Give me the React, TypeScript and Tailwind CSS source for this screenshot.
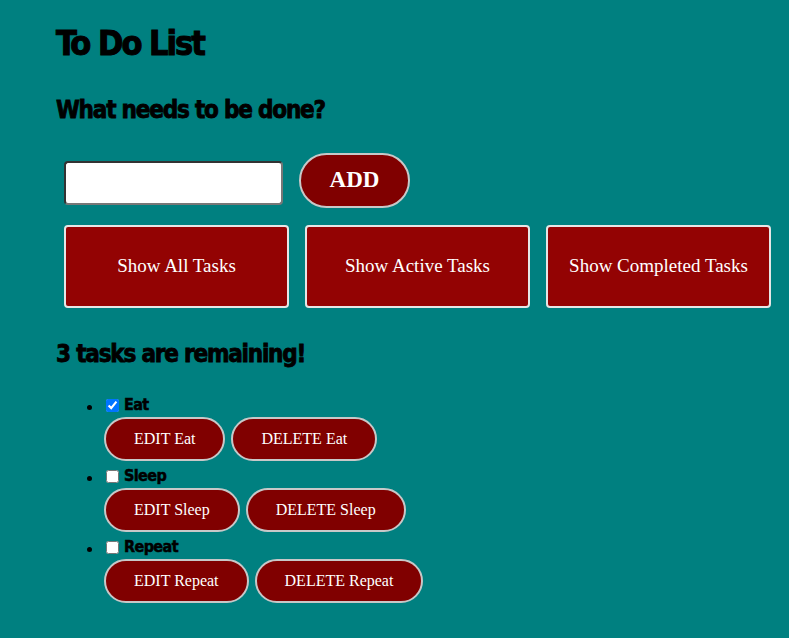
import { useState } from 'react'

const headFont = { fontFamily: 'Impact, "Liberation Sans Narrow", "DejaVu Sans Condensed", sans-serif' }

const App = () => {
  const [tasks, setTasks] = useState([
    { id: 1, name: 'Eat', done: true },
    { id: 2, name: 'Sleep', done: false },
    { id: 3, name: 'Repeat', done: false },
  ])
  const filters = ['Show All Tasks', 'Show Active Tasks', 'Show Completed Tasks']

  return (
    <div className="min-h-screen bg-[#008080] pl-14 pt-[23px] text-black font-['Liberation_Serif',serif]">
      <h1
        style={headFont}
        className="text-[34px] leading-[40px] font-bold tracking-[-2px] [-webkit-text-stroke:1px_black]"
      >
        To Do List
      </h1>
      <h2
        style={headFont}
        className="mt-[32px] text-[24px] leading-[30px] font-bold tracking-[-1.2px] [-webkit-text-stroke:0.8px_black]"
      >
        What needs to be done?
      </h2>

      {/* Add form */}
      <div className="mt-[28px] flex items-start gap-4 pl-2">
        <input
          type="text"
          className="mt-[8px] h-[44px] w-[219px] rounded-[4px] border-2 border-[#333] border-b-[#777] border-r-[#777] bg-white px-2"
        />
        <button className="h-[55px] w-[111px] rounded-full border-2 border-[#c8c8c8] bg-[#800000] text-[23px] font-bold text-white">
          ADD
        </button>
      </div>

      {/* Filters */}
      <div className="mt-[17px] flex gap-4 pl-2">
        {filters.map((f) => (
          <button
            key={f}
            className="h-[83px] w-[225px] rounded-[4px] border-2 border-[#e6e6e6] bg-[#930303] text-[19px] text-white"
          >
            {f}
          </button>
        ))}
      </div>

      <h2
        style={headFont}
        className="mt-[31px] text-[24px] leading-[30px] font-bold tracking-[-1.2px] [-webkit-text-stroke:0.8px_black]"
      >
        {tasks.filter((t) => !t.done).length + (tasks.some((t) => t.done) ? 1 : 0)} tasks are remaining!
      </h2>

      {/* Task list */}
      <ul className="mt-[24px] list-disc pl-[48px] marker:text-[18px]">
        {tasks.map((t) => (
          <li key={t.id} className="mb-[3px] text-[16px] leading-[24px]">
            <div className="flex h-[24px] items-center gap-[5px] pl-[2px]">
              <input
                type="checkbox"
                checked={t.done}
                onChange={() =>
                  setTasks(tasks.map((x) => (x.id === t.id ? { ...x, done: !x.done } : x)))
                }
                className="m-0 h-[13px] w-[13px]"
              />
              <span
                style={headFont}
                className="text-[16px] font-bold tracking-[-0.6px] [-webkit-text-stroke:0.5px_black]"
              >
                {t.name}
              </span>
            </div>
            <div className="flex gap-[6px]">
              <button className="h-[44px] rounded-full border-2 border-[#c8c8c8] bg-[#800000] px-[28px] text-[16px] text-white">
                EDIT {t.name}
              </button>
              <button className="h-[44px] rounded-full border-2 border-[#c8c8c8] bg-[#800000] px-[28px] text-[16px] text-white">
                DELETE {t.name}
              </button>
            </div>
          </li>
        ))}
      </ul>
    </div>
  )
}

export default App
